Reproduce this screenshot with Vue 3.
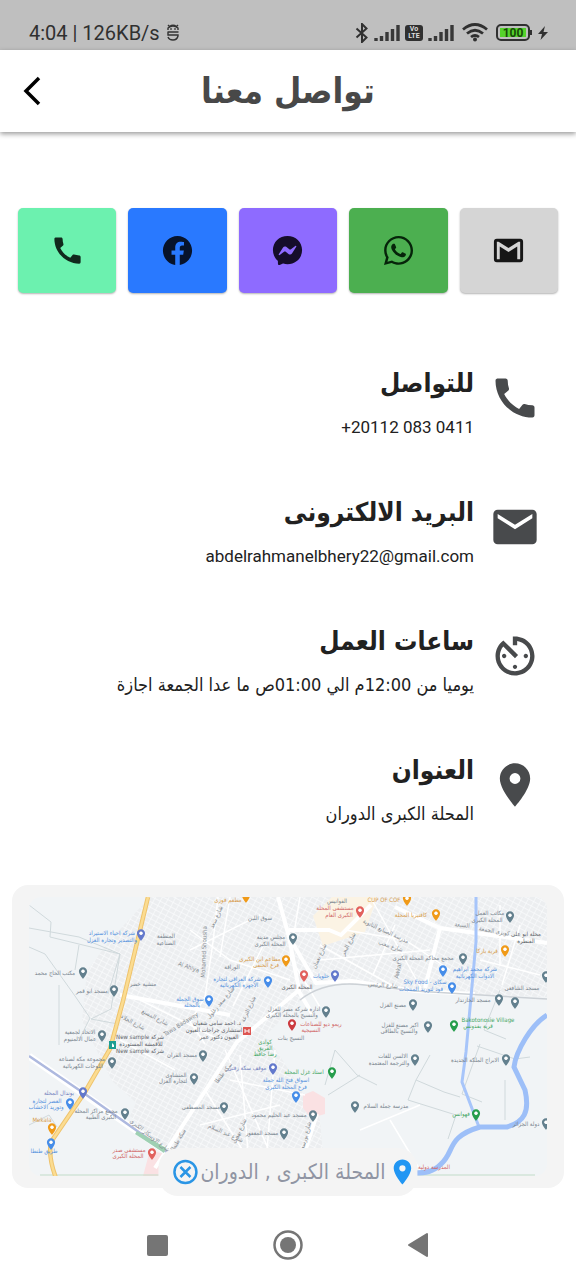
<script setup>
const actions = [
  { id: 'call', label: 'اتصال', icon: 'phone' },
  { id: 'facebook', label: 'فيسبوك', icon: 'facebook' },
  { id: 'messenger', label: 'ماسنجر', icon: 'messenger' },
  { id: 'whatsapp', label: 'واتساب', icon: 'whatsapp' },
  { id: 'gmail', label: 'بريد جوجل', icon: 'gmail' },
]

const icons = {
  phone: 'M20.01 15.38c-1.23 0-2.42-.2-3.53-.56-.35-.12-.74-.03-1.01.24l-1.57 1.97c-2.83-1.35-5.48-3.9-6.89-6.83l1.95-1.66c.27-.28.35-.67.24-1.02-.37-1.11-.56-2.3-.56-3.53 0-.54-.45-.99-.99-.99H4.19C3.65 3 3 3.24 3 3.99 3 13.28 10.73 21 20.01 21c.71 0 .99-.63.99-1.18v-3.45c0-.54-.45-.99-.99-.99z',
  facebook: 'M12 2.04C6.5 2.04 2 6.53 2 12.06c0 5 3.66 9.15 8.44 9.9v-7H7.9v-2.9h2.54V9.85c0-2.51 1.49-3.89 3.78-3.89 1.09 0 2.23.19 2.23.19v2.47h-1.26c-1.24 0-1.63.77-1.63 1.56v1.88h2.78l-.45 2.9h-2.33v7A10 10 0 0 0 22 12.06C22 6.53 17.5 2.04 12 2.04z',
  messenger: 'M12 2C6.36 2 2 6.13 2 11.7c0 2.91 1.19 5.44 3.14 7.17.16.13.26.35.27.57l.05 1.78c.04.57.61.94 1.13.71l1.98-.87c.17-.06.36-.09.53-.06.9.27 1.9.4 2.9.4 5.64 0 10-4.13 10-9.7C22 6.13 17.64 2 12 2m6 7.46-2.93 4.67c-.47.73-1.47.92-2.17.37l-2.34-1.73a.6.6 0 0 0-.72 0l-3.16 2.4c-.42.33-.97-.17-.68-.63l2.93-4.67c.47-.73 1.47-.92 2.17-.4l2.34 1.76a.6.6 0 0 0 .72 0l3.16-2.4c.42-.33.97.17.68.63z',
  whatsapp: 'M12.04 2C6.58 2 2.13 6.45 2.13 11.91c0 1.75.46 3.45 1.32 4.95L2.05 22l5.25-1.38c1.45.79 3.08 1.21 4.74 1.21 5.46 0 9.91-4.45 9.91-9.91 0-2.65-1.03-5.14-2.9-7.01A9.82 9.82 0 0 0 12.04 2m.01 1.67c2.2 0 4.26.86 5.82 2.42a8.22 8.22 0 0 1 2.41 5.83c0 4.54-3.7 8.23-8.24 8.23-1.48 0-2.93-.39-4.19-1.15l-.3-.17-3.12.82.83-3.04-.2-.32a8.19 8.19 0 0 1-1.26-4.38c.01-4.54 3.7-8.24 8.25-8.24M8.53 7.33c-.16 0-.43.06-.66.31-.22.25-.87.86-.87 2.07 0 1.22.89 2.39 1 2.56.14.17 1.76 2.67 4.25 3.73.59.27 1.05.42 1.41.53.59.19 1.13.16 1.56.1.48-.07 1.46-.6 1.67-1.18s.21-1.07.15-1.18c-.07-.1-.23-.16-.48-.27-.25-.14-1.47-.74-1.69-.82-.23-.08-.37-.12-.56.12-.16.25-.64.81-.78.97-.15.17-.29.19-.53.07-.26-.13-1.06-.39-2-1.23-.74-.66-1.23-1.47-1.38-1.72-.12-.24-.01-.39.11-.5.11-.11.27-.29.37-.44.13-.14.17-.25.25-.41.08-.17.04-.31-.02-.43-.06-.11-.56-1.35-.77-1.84-.2-.48-.4-.42-.56-.43-.14 0-.3-.01-.47-.01z',
  gmail: 'M20 4H4a2 2 0 0 0-2 2v12a2 2 0 0 0 2 2h16a2 2 0 0 0 2-2V6a2 2 0 0 0-2-2M20 18h-2V9.25L12 13 6 9.25V18H4V6h1.2L12 10.25 18.8 6H20z',
  mail: 'M20 4H4c-1.1 0-2 .9-2 2v12c0 1.100.9 2 2 2h16c1.100 0 2-.9 2-2V6c0-1.100-.9-2-2-2m0 4-8 5-8-5V6l8 5 8-5z',
  timer: 'M11 17c0 .55.45 1 1 1s1-.45 1-1-.45-1-1-1-1 .45-1 1m0-14v4h2V5.080c3.390.490 6 3.390 6 6.920 0 3.870-3.130 7-7 7s-7-3.130-7-7c0-1.680.59-3.220 1.580-4.420L12 13l1.410-1.410-6.800-6.800v.02C4.420 6.450 3 9.050 3 12c0 4.970 4.020 9 9 9 4.970 0 9-4.030 9-9s-4.030-9-9-9zm7 9c0-.55-.45-1-1-1s-1 .45-1 1 .45 1 1 1 1-.45 1-1M6 12c0 .55.45 1 1 1s1-.45 1-1-.45-1-1-1-1 .45-1 1',
  place: 'M12 2C8.130 2 5 5.130 5 9c0 5.250 7 13 7 13s7-7.750 7-13c0-3.870-3.130-7-7-7m0 9.500a2.500 2.500 0 0 1 0-5 2.500 2.500 0 0 1 0 5',
}

const details = [
  { icon: 'phone', title: 'للتواصل', text: '+20112 083 0411', ltr: true },
  { icon: 'mail', title: 'البريد الالكترونى', text: 'abdelrahmanelbhery22@gmail.com', ltr: true },
  { icon: 'timer', title: 'ساعات العمل', text: 'يوميا من 12:00م الي 01:00ص ما عدا الجمعة اجازة' },
  { icon: 'place', title: 'العنوان', text: 'المحلة الكبرى الدوران' },
]

const pins = [
  [141, 934, 'indigo'], [83, 972, 'slate'], [114, 990, 'slate'], [102, 1035, 'slate'],
  [246, 896, 'orange'], [360, 911, 'red'], [293, 938, 'slate'], [286, 960, 'orange'],
  [304, 975, 'red'], [335, 975, 'indigo'], [268, 981, 'blue'], [209, 1000, 'blue'],
  [326, 1011, 'slate'], [292, 1024, 'crimson'], [407, 899, 'orange'], [436, 914, 'orange'],
  [510, 916, 'slate'], [505, 950, 'orange'], [463, 958, 'slate'], [443, 970, 'blue'],
  [452, 987, 'blue'], [413, 1004, 'slate'], [499, 999, 'slate'], [515, 1002, 'slate'],
  [428, 1026, 'slate'], [454, 1025, 'green'], [546, 976, 'slate'], [112, 1062, 'slate'],
  [83, 1092, 'indigo'], [70, 1103, 'blue'], [52, 1128, 'orange'], [51, 1143, 'blue'],
  [125, 1113, 'slate'], [152, 1153, 'red'], [194, 1078, 'slate'], [203, 1055, 'slate'],
  [273, 1068, 'indigo'], [332, 1072, 'green'], [296, 1096, 'blue'], [224, 1107, 'slate'],
  [313, 1115, 'slate'], [284, 1133, 'slate'], [355, 1106, 'slate'], [415, 1059, 'slate'],
  [506, 1059, 'slate'], [476, 1114, 'green'], [546, 1123, 'slate'],
]

const labels = [
  [112, 935, 'شركة احياء الاستيراد', 'blue'], [112, 942, 'والتصدير وتجارة الغزل', 'blue'],
  [166, 938, 'المنطقة', 'slate'], [166, 945, 'الصناعية', 'slate'],
  [55, 975, 'مكتب الحاج محمد', 'slate'], [92, 993, 'مسجد ابو قمر', 'slate'],
  [143, 986, 'منشية خضر', 'slate'], [80, 1034, 'الاتحاد لجمعية', 'slate'], [80, 1041, 'عمال الالمنيوم', 'slate'],
  [140, 1039, 'New sample شركة', 'dark'], [141, 1046, 'للأقمشة المستوردة', 'dark'], [140, 1053, 'New sample شركة', 'dark'],
  [228, 902, 'مطعم فوزى', 'orange'], [260, 920, 'سوق اللبن', 'slate'],
  [337, 903, 'الفوانيس', 'slate'], [335, 910, 'مستشفى المحلة', 'red'], [339, 917, 'الكبرى العام', 'red'],
  [271, 939, 'مجلس مدينة', 'slate'], [270, 946, 'المحلة الكبرى', 'slate'],
  [260, 961, 'مطاعم ابن الكبرى', 'orange'], [266, 967, 'فرع الحنفى', 'orange'],
  [232, 969, 'الوراقة', 'slate'], [237, 981, 'شركة العراقى لتجارة', 'blue'], [239, 987, 'الاجهزة الكهربائية', 'blue'],
  [297, 989, 'المحلة الكبرى', 'dark'], [321, 978, 'حلويات', 'blue'],
  [190, 1001, 'سوق الجملة', 'blue'], [192, 1007, 'بالمحلة', 'blue'],
  [294, 1011, 'ادارة شركة مصر للغزل', 'slate'], [292, 1017, 'والنسيج بالمحلة الكبرى', 'slate'],
  [321, 1026, 'ريمو ديو للصناعات', 'red'], [311, 1032, 'النسيجية', 'red'], [291, 1040, 'النسيج بنات', 'slate'],
  [217, 1025, 'د. احمد سامى شعبان', 'dark'], [214, 1032, 'استشارى جراحات العيون', 'dark'], [219, 1039, 'العيون دكتور عمر', 'dark'],
  [265, 1044, 'كوادى', 'green'], [265, 1050, 'الفريق', 'green'], [265, 1056, 'رضا حافظ', 'green'],
  [384, 902, 'CUP OF COF', 'orange'], [411, 917, 'كافتيريا المحلة', 'orange'],
  [490, 915, 'مكاتب العمل', 'slate'], [487, 922, 'المحلة الكبرى', 'slate'],
  [526, 936, 'محلة ابو على', 'dark'], [526, 943, 'القنطرة', 'dark'], [487, 953, 'قرية باركا', 'orange'],
  [423, 960, 'مجمع محاكم المحلة الكبرى', 'slate'], [475, 971, 'شركة محمد ابراهيم', 'blue'], [475, 978, 'الادوات الكهربائية', 'blue'],
  [425, 984, 'Sky Food - سكاى', 'blue'], [421, 991, 'فود لتوريد المنتجات', 'blue'],
  [393, 1007, 'مصنع الغزل', 'slate'], [473, 1002, 'مسجد الخازندار', 'slate'], [522, 990, 'مسجد الشافعى', 'slate'],
  [400, 1027, 'اكبر مصنع للغزل', 'slate'], [399, 1033, 'والنسيج بالطاقى', 'slate'],
  [488, 1022, 'Bakotonosie Village', 'green'], [478, 1028, 'قرية بقدونس', 'green'],
  [82, 1061, 'مجموعة مكة لصناعة', 'slate'], [83, 1068, 'اللوحات الكهربائية', 'slate'],
  [59, 1095, 'بوندال المحلة', 'indigo'], [47, 1103, 'العصر لتجارة', 'blue'], [46, 1109, 'وتوريد الاخشاب', 'blue'],
  [42, 1122, 'Mekala', 'orange'], [44, 1153, 'طريق طنطا', 'blue'],
  [96, 1113, 'مجمع مراكز المحلة', 'slate'], [101, 1119, 'الكبرى الطبية', 'slate'],
  [129, 1152, 'مستشفى صدر', 'red'], [128, 1158, 'المحلة الكبرى', 'red'],
  [176, 1077, 'المنشاوى', 'slate'], [173, 1083, 'لتجارة الغزل', 'slate'], [182, 1057, 'مسجد القران', 'slate'],
  [247, 1070, 'موقف سكة زفتى', 'indigo'], [304, 1074, 'استاد غزل المحلة', 'green'],
  [286, 1082, 'اسواق فتح الله جملة', 'blue'], [286, 1089, 'فرع المحلة الكبرى', 'blue'],
  [201, 1109, 'مسجد المصطفى', 'slate'], [279, 1117, 'مسجد عبد الحليم محمود', 'slate'],
  [262, 1135, 'مسجد المغفور', 'slate'], [386, 1108, 'مدرسة جملة السلام', 'slate'],
  [393, 1058, 'الالسن للغات', 'slate'], [389, 1065, 'والترجمة المعتمدة', 'slate'],
  [475, 1062, 'الابراج الملكة الجديدة', 'slate'], [461, 1116, 'فهوانس', 'green'], [526, 1126, 'دولة الجزائر', 'slate'],
  [434, 1169, 'المدرسة دولية', 'red'],
]

const streets = [
  [206, 952, -88, 'Mohamed Shousha'], [218, 918, -66, 'شارع سعد'], [188, 969, 20, 'Al Ahlya'],
  [222, 1004, -50, 'شارع سعد زغلول'], [250, 1010, -65, 'شارع الترعة'], [182, 1026, -32, 'Tawa Badawey'],
  [385, 933, 25, 'مدرسة الصنايع الثانوية'], [390, 948, 18, 'شارع محب'], [383, 987, 5, 'شارع الرئيس'],
  [462, 927, 6, 'السبعة'], [494, 933, 10, 'كوبرى الجمعة'], [225, 1074, -52, 'سكة طنطا'],
  [149, 1137, 38, 'شارع الاوسكار الكبرى'], [180, 1141, -60, 'سكة طنطا'], [225, 1135, 24, 'شارع عبد السلام'],
  [241, 1132, -65, 'شارع بهجت'], [307, 1138, -75, 'شارع بورسعيد'], [132, 1024, 28, 'شارع الجلاء'],
  [154, 1019, 28, 'شارع المصنع'], [400, 971, -78, 'Awkaf'], [321, 957, -65, 'شارع نعمان'], [350, 945, -62, 'شارع البحر'],
]
</script>

<template>
  <div class="screen" dir="rtl" lang="ar">
    <div class="status" dir="ltr">
      <div class="status-left">
        <span>4:04 | 126KB/s</span>
        <svg class="robot" viewBox="0 0 14 18" aria-hidden="true">
          <path d="M2 1l1.500 1.500Q7 0 10.500 2.500L12 1M2 6V4Q7 0 12 4v2M1.500 8h11M2 8v3h10v1q-1 4-5 4t-5-3" fill="none" stroke="#333" stroke-width="1.400" />
          <circle cx="5" cy="5" r=".8" /><circle cx="9" cy="5" r=".8" />
        </svg>
      </div>
      <div class="status-right">
        <svg width="14" height="20" viewBox="0 0 14 20" aria-hidden="true"><path d="M1.500 5.500l10 9L7 19V1l4.500 4.500-10 9" fill="none" stroke="#303030" stroke-width="2" /></svg>
        <svg width="26" height="18" viewBox="0 0 26 18" aria-hidden="true"><path d="M2 17v-3M7.500 17v-5M13 17V8M18.500 17V5M24 17V1" stroke="#383838" stroke-width="3.400" /></svg>
        <span class="volte"><span>Vo</span><span>LTE</span></span>
        <svg width="26" height="18" viewBox="0 0 26 18" aria-hidden="true"><path d="M2 17v-3M7.500 17v-5M13 17V8M18.500 17V5M24 17V1" stroke="#383838" stroke-width="3.400" /></svg>
        <svg class="wifi" width="26" height="19" viewBox="0 0 26 19" aria-hidden="true"><path d="M1 6.500Q13-3.500 25 6.500M5 10.500q8-6.500 16 0M9 14q4-3 8 0" fill="none" stroke="#303030" stroke-width="2.800" /><circle cx="13" cy="16.500" r="2" fill="#303030" /></svg>
        <span class="battery"><span class="charge">100</span></span>
        <svg width="10" height="16" viewBox="0 0 10 16" aria-hidden="true"><path d="M7 1L0 9h4L2.500 15 10 7H5.500z" fill="#303030" /></svg>
      </div>
    </div>

    <header class="bar">
      <h1>تواصل معنا</h1>
      <button class="back" type="button" aria-label="رجوع">
        <svg width="20" height="30" viewBox="0 0 20 30" aria-hidden="true"><path d="M17 2L4 15l13 13" fill="none" stroke="#000" stroke-width="3.500" /></svg>
      </button>
    </header>

    <main>
      <nav class="actions" dir="ltr">
        <button v-for="a in actions" :key="a.id" type="button" :class="['action', a.id]" :aria-label="a.label">
          <svg viewBox="0 0 24 24" aria-hidden="true"><path :d="icons[a.icon]" fill-rule="evenodd" /></svg>
        </button>
      </nav>

      <section class="details">
        <article v-for="d in details" :key="d.title" class="detail">
          <svg class="detail-icon" viewBox="0 0 24 24" aria-hidden="true"><path :d="icons[d.icon]" /></svg>
          <div>
            <h2>{{ d.title }}</h2>
            <p :class="{ latin: d.ltr }"><bdi :dir="d.ltr ? 'ltr' : 'rtl'">{{ d.text }}</bdi></p>
          </div>
        </article>
      </section>

      <section class="map-card">
        <svg class="map" viewBox="29 897 518 279" role="img" aria-label="خريطة المحلة الكبرى">
          <defs>
            <pattern id="blocks" width="6" height="5" patternUnits="userSpaceOnUse" patternTransform="rotate(28)">
              <rect width="6" height="5" fill="#eceef0" /><path d="M0 0h6M0 0v5" stroke="#fafbfc" stroke-width="1.400" />
            </pattern>
            <symbol id="pin" viewBox="0 0 24 24" overflow="visible"><path :d="icons.place" /><circle cx="12" cy="9" r="2.800" fill="#fff" /></symbol>
          </defs>
          <rect x="29" y="897" width="518" height="279" fill="#f1f4f6" />
          <path d="M150 897h397v100l-90-3-70-8-70-2-40 40-90 90-25 12-50-45-30-60 5-50 22-30z" fill="url(#blocks)" />
          <path d="M165 1040l60-20 45 20 50 80 5 56H185l-55-60z" fill="url(#blocks)" />
          <path d="M332 897h45l-12 35-42 14-10-30z" fill="#fbf3e4" />
          <path d="M303 1095l10-4 12 7v16l-14 4-8-10zM150 1150l14 4v22h-21z" fill="#fae1e3" />
          <g class="outline">
            <path d="M29 905l22 17-1 15 70 17M29 928l50 9 41 17-9 55-20 10 27 5M29 947l16 7 30 42 15 22-10 20M79 945l-4 25M59 985v60M120 954l-12 40" />
            <path d="M477 1046l38 13 15-2M480 1044l-18 50 20 8M430 1055l-14 25-8 20 48 15-8 24M416 1080l28 12 16 5M505 1080v40M500 990l-16 40 22 9M325 1085l10-35 22 25 20 10M29 1125l20-10 8 12M360 1075l-32 20" />
          </g>
          <g class="minor">
            <path d="M218 897l-5 45-8 55-15 25 15 22M190 930l40 30 60 20M230 897l-10 60M300 897l-10 60 30 50M263 946l-30 60M190 950l70-35M320 945l80 45M345 930l60 10 45 30M372 900l50 90M395 925l-22 50M320 960l110-10M480 960l60 15M500 905v60M520 925l-18 60" />
            <path d="M240 1055l10 121M230 1080l75 15M200 1125l80-20M225 1050l55 126M275 1050l-10 126M205 1090l50 80M120 1040l55 30M140 1000l80 40M360 1130l60-25M390 1120l30 50" />
          </g>
          <g class="major">
            <path d="M278 897l11 40 10 53-62 52-82 126M289 930l40 0 12 5 30-30M288 935l28 48 36-2 63 10 60 3M395 907l45 21 107 15M440 928l-15 60M120 995l110 20M295 985l18 30M297 1176l20-62" />
          </g>
          <path d="M300 1000q25-20 65-15l50 6 132 8" fill="none" stroke="#ccd1d6" stroke-width="1.500" />
          <path d="M29 1056l135 94" stroke="#fff" stroke-width="7" fill="none" />
          <path d="M29 1056l56 38 82 58" stroke="#aeb9df" stroke-width="2.500" fill="none" />
          <path d="M137 1131l29 17-2 5-29-19z" fill="#9ed0b3" />
          <path d="M40 1175h125M415 1175h120" stroke="#c3dcc8" stroke-width="1" />
          <path d="M148 897l-25 104-13 48-25 43-34 50q-3 15 5 36" stroke="#eec36d" stroke-width="4.500" fill="none" />
          <path d="M148 897l-25 104-13 48-25 43-34 50q-3 15 5 36" stroke="#fbdc91" stroke-width="2.500" fill="none" />
          <path d="M476 897v45l-10 110-4 30 17 45" stroke="#a7c5fa" stroke-width="3" fill="none" />
          <path d="M547 1015c-16 10-31 36-33 52l11 23c5 22-1 32-18 37h-27c-34 10-25 25-39 37-8 8-15 9-27 9" stroke="#9dbff8" stroke-width="5" fill="none" />
          <text v-for="(s, i) in streets" :key="'s' + i" class="street" :x="s[0]" :y="s[1]" :transform="`rotate(${s[2]} ${s[0]} ${s[1]})`">{{ s[3] }}</text>
          <text v-for="(l, i) in labels" :key="'l' + i" :class="['label', l[3]]" :x="l[0]" :y="l[1]">{{ l[2] }}</text>
          <use v-for="(p, i) in pins" :key="'p' + i" href="#pin" :class="p[2]" :x="p[0] - 7" :y="p[1] - 6" width="14" height="14" />
          <rect x="109" y="1041" width="7" height="8" fill="#1d9e91" /><path d="M112 1047v-4l2 2v2" fill="#fff" />
          <rect x="243" y="1027" width="8" height="8" fill="#dd5551" /><path d="M245 1029v4M249 1029v4M245 1031h4" stroke="#fff" fill="none" />
        </svg>
        <div class="place">
          <svg class="place-pin" viewBox="0 0 24 24" aria-hidden="true"><path :d="icons.place" /></svg>
          <span>المحلة الكبرى , الدوران</span>
          <button type="button" aria-label="مسح">
            <svg width="26" height="26" viewBox="0 0 26 26" aria-hidden="true"><circle cx="13" cy="13" r="11" /><path d="M8 8l10 10M18 8L8 18" /></svg>
          </button>
        </div>
      </section>
    </main>

    <nav class="system" dir="ltr">
      <button type="button" aria-label="التطبيقات"><svg width="30" height="30" viewBox="0 0 30 30"><rect x="5" y="5" width="21" height="21" rx="2" fill="#757575" /></svg></button>
      <button type="button" aria-label="الرئيسية"><svg width="30" height="30" viewBox="0 0 30 30"><circle cx="15" cy="15" r="13.500" fill="none" stroke="#757575" stroke-width="2.500" /><circle cx="15" cy="15" r="8" fill="#757575" /></svg></button>
      <button type="button" aria-label="السابق"><svg width="30" height="30" viewBox="0 0 30 30"><path d="M5 15L23 4v22z" fill="#757575" stroke="#757575" stroke-width="2" stroke-linejoin="round" /></svg></button>
    </nav>
  </div>
</template>

<style>
body { margin: 0; background: #fff; }
</style>

<style scoped>
.screen { min-height: 100vh; display: flex; flex-direction: column; background: #fff; color: #212121; font-family: "DejaVu Sans Condensed", "DejaVu Sans", sans-serif; }
button { border: 0; padding: 0; background: none; display: flex; align-items: center; justify-content: center; cursor: pointer; }
.status { box-sizing: border-box; height: 50px; padding: 15px 28px 0 29px; background: #bfbfbf; color: #303030; display: flex; align-items: center; justify-content: space-between; font: 20px/36px Roboto, sans-serif; }
.status-left { display: flex; align-items: center; gap: 6px; }
.robot { width: 14px; height: 18px; }
.status-right { display: flex; align-items: center; gap: 5px; }
.volte { width: 18px; height: 16px; border-radius: 3px; background: #303030; color: #ddd; display: flex; flex-direction: column; font: bold 7px/7px Roboto, sans-serif; padding-top: 1px; box-sizing: border-box; align-items: center; }
.wifi { margin: 0 3px; }
.battery { position: relative; box-sizing: border-box; width: 34px; height: 17px; padding: 2px; border: 2px solid #303030; border-radius: 5px; margin-right: 3px; }
.battery::after { content: ""; position: absolute; right: -4px; top: 4px; width: 2px; height: 5px; background: #303030; }
.charge { display: block; height: 9px; background: #55d32b; color: #174a08; font: bold 12px/10px Roboto, sans-serif; text-align: center; }
.bar { position: relative; height: 82px; display: flex; align-items: center; justify-content: center; background: #fff; box-shadow: 0 2px 5px rgba(0, 0, 0, .4); }
.bar h1 { margin: 0; font-size: 35px; line-height: 48px; font-weight: bold; color: #484848; }
.back { position: absolute; left: 12px; top: 20px; width: 40px; height: 42px; }
.actions { display: grid; grid-template-columns: repeat(5, 1fr); gap: 12px; padding: 76px 18px 0; }
.action { height: 85px; border-radius: 5px; box-shadow: 0 1px 2px rgba(0, 0, 0, .3); color: #161616; }
.action svg { width: 35px; height: 35px; fill: currentColor; }
.call { background: #6cf1af; }
.call svg { color: #11291d; }
.facebook { background: #2979ff; }
.facebook svg { color: #07132b; }
.messenger { background: #8e6bff; }
.messenger svg { color: #150d2a; }
.whatsapp { background: #4caf50; }
.whatsapp svg { color: #06240a; }
.gmail { background: #d5d5d5; }
.details { padding: 68px 35px 0; display: flex; flex-direction: column; gap: 49px; }
.detail { display: flex; align-items: flex-start; gap: 15px; height: 80px; }
.detail-icon { width: 52px; height: 52px; margin-top: 11px; fill: #484a4c; flex: none; }
h2 { margin: 0; font-size: 26px; line-height: 44px; font-weight: bold; }
.detail p { margin: 0; font-size: 18px; line-height: 44px; }
.detail .latin { font-family: Roboto, sans-serif; font-size: 17px; }
.map-card { position: relative; margin: 57px 12px 0; padding: 12px 17px; background: #f4f4f4; border-radius: 16px; }
.map { display: block; width: 100%; border-radius: 12px; direction: ltr; }
.outline { fill: none; stroke: #d0d9dc; stroke-width: 1; }
.minor { fill: none; stroke: #fff; stroke-width: 1.5; }
.major { fill: none; stroke: #fff; stroke-width: 4; }
.label { font-size: 6px; text-anchor: middle; fill: #77838d; }
.street { font-size: 6px; text-anchor: middle; fill: #858b90; }
.label.blue { fill: #5290dd; }
.label.red { fill: #d06565; }
.label.orange { fill: #d79c4b; }
.label.green { fill: #43a663; }
.label.indigo { fill: #7382bd; }
.label.dark { fill: #5c6268; }
use.slate { fill: #63808e; }
use.blue { fill: #468de9; }
use.indigo { fill: #6379cc; }
use.red { fill: #e2615d; }
use.crimson { fill: #cc3b40; }
use.orange { fill: #f09a18; }
use.green { fill: #269d4c; }
.place { position: absolute; bottom: -8px; left: 50%; transform: translateX(-50%); height: 48px; padding: 0 0 0 14px; display: flex; align-items: center; gap: 2px; white-space: nowrap; background: #f4f4f4; border-radius: 20px; color: #9095a3; font-size: 21px; }
.place-pin { width: 30px; height: 30px; fill: #2196f3; }
.place button svg { fill: none; stroke: #2a95e5; stroke-width: 2.5; }
.system { flex: 1; min-height: 76px; box-sizing: border-box; padding: 22px 92px 0; display: grid; grid-template-columns: repeat(3, 1fr); align-items: center; justify-items: center; }
</style>
